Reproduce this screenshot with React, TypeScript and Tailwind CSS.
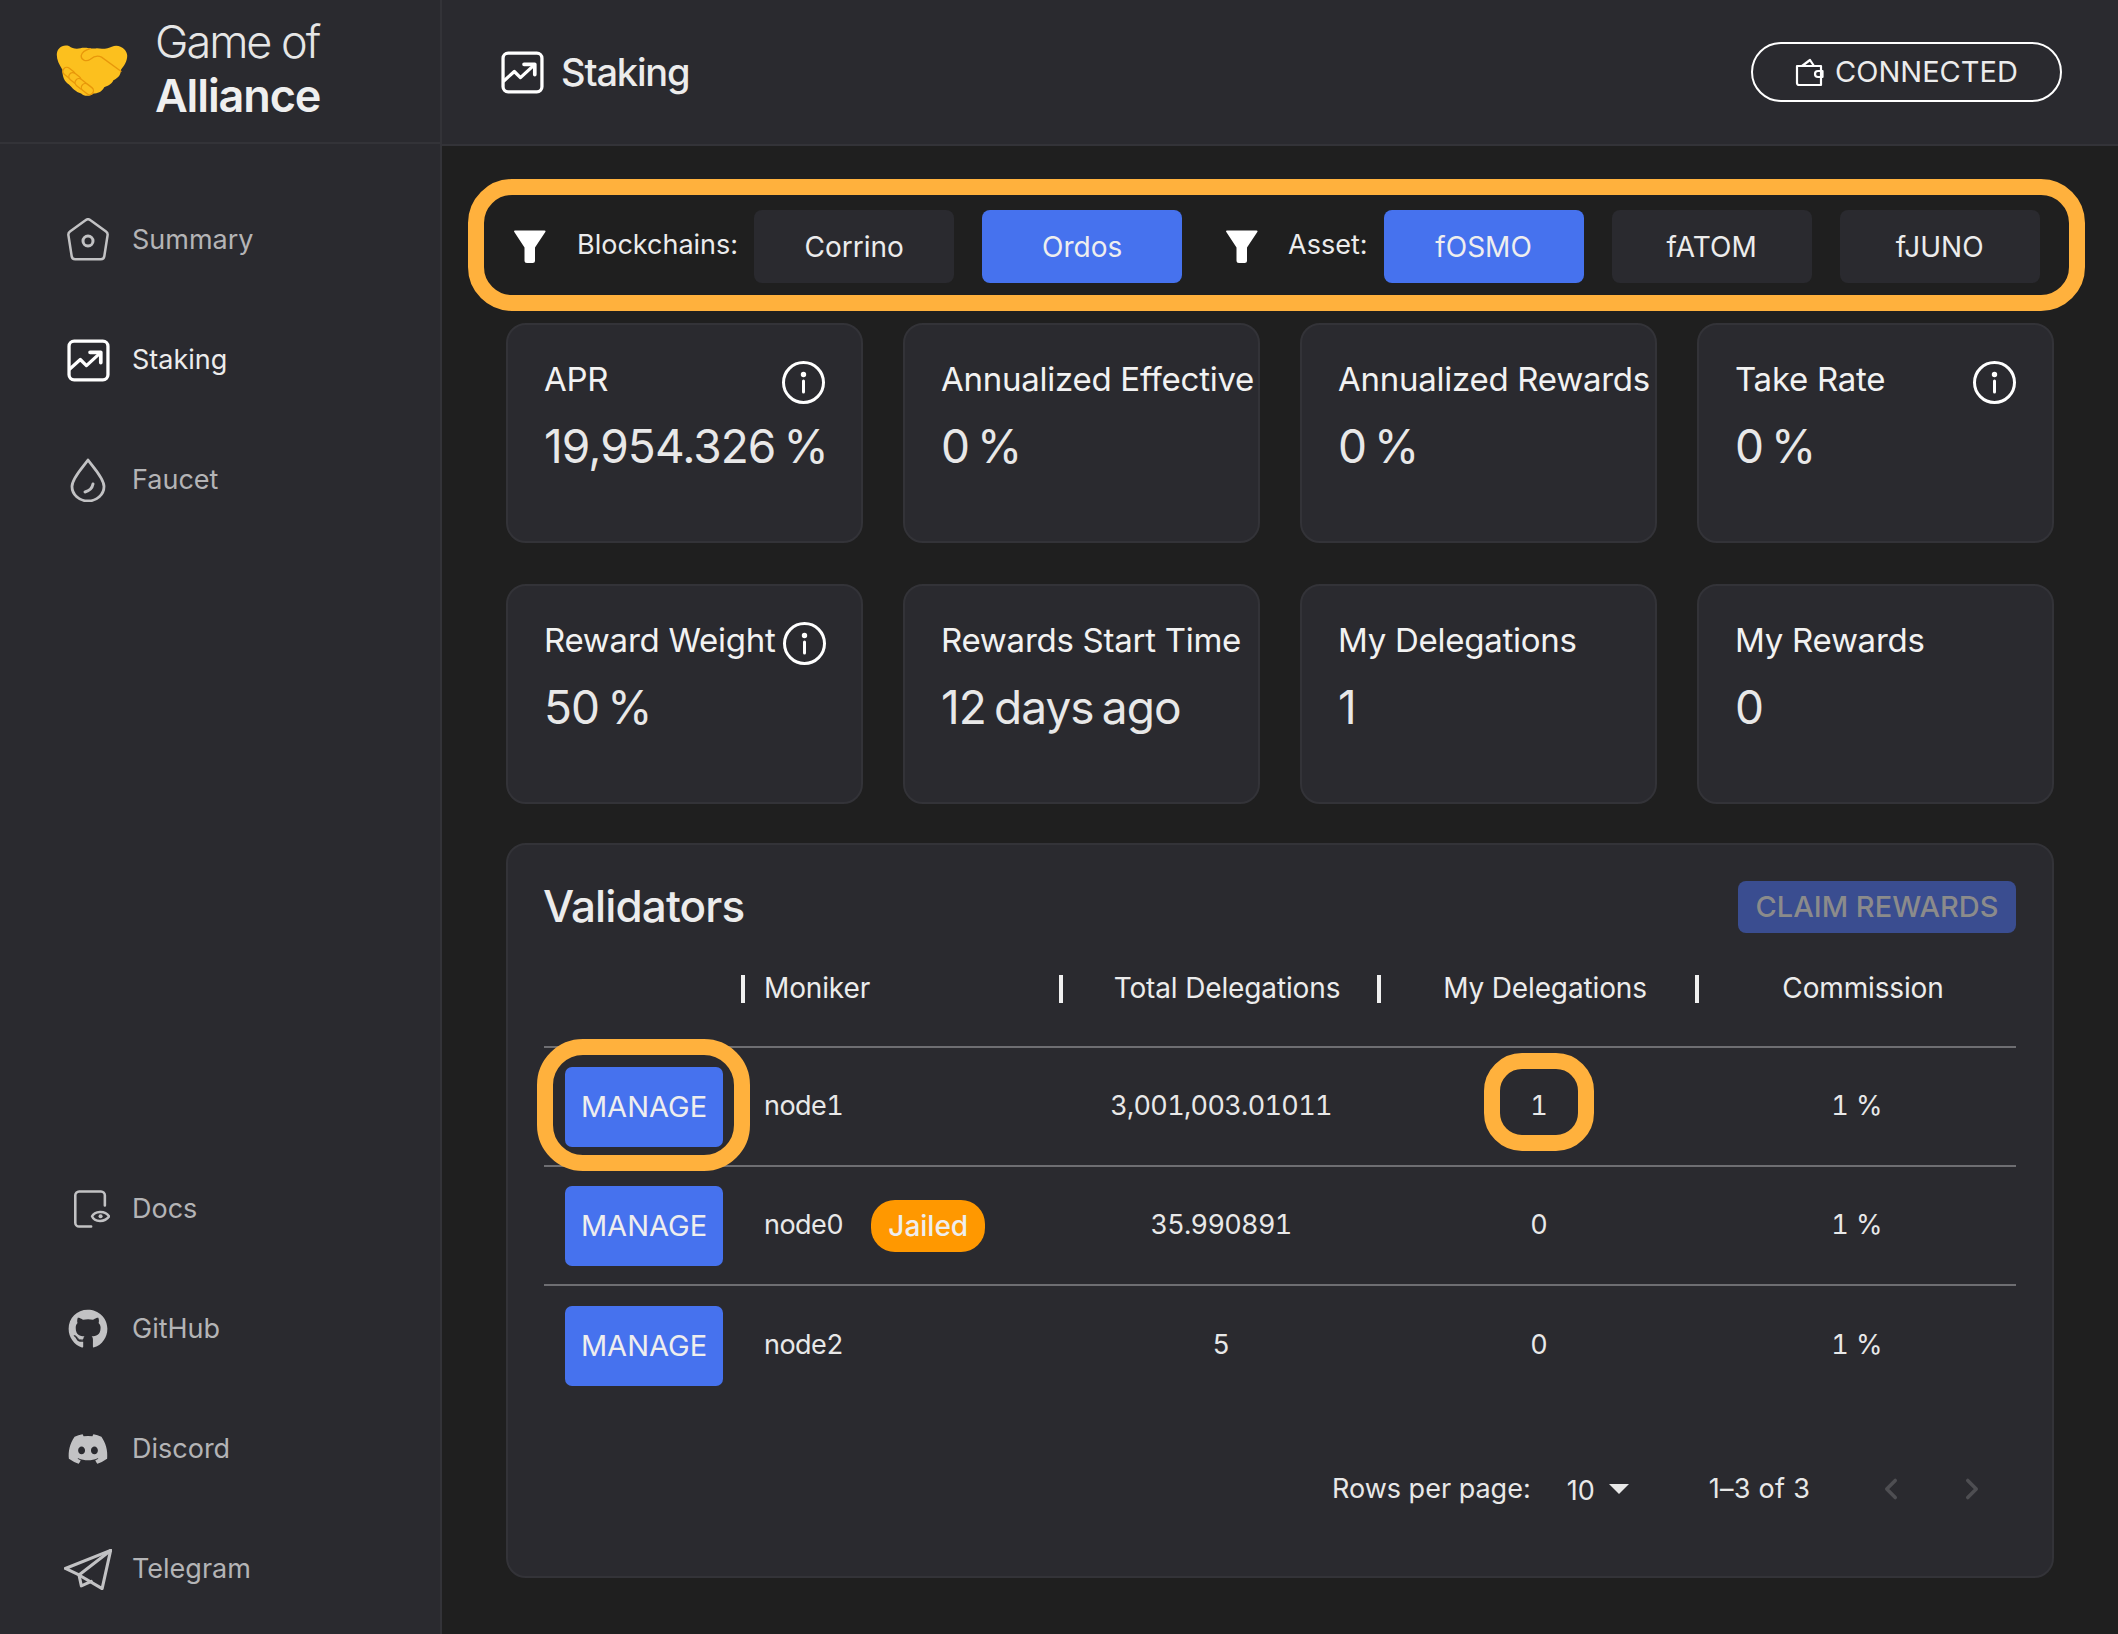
import { ChevronLeft, ChevronRight } from "lucide-react";
import { FaDiscord, FaGithub } from "react-icons/fa";

function Handshake() {
  const fingers = [
    [85, 160],
    [103, 176],
    [122, 194],
    [141, 209],
  ];
  return (
    <svg width="72" height="52" viewBox="48 75 214 158" className="shrink-0">
      <path
        d="M48 105C48 85 65 72 85 78C95 85 105 88 120 85C135 80 150 88 170 85C190 88 205 85 215 80C240 70 262 90 262 108C262 125 252 140 243 150C243 170 228 178 220 182C215 195 200 200 192 203C185 218 170 222 160 222C150 232 130 232 122 222C105 218 95 205 85 195C70 185 65 170 65 150C55 135 48 120 48 105Z"
        fill="#fcc01e"
      />
      <path d="M150 86C135 90 124 97 122 108C122 122 138 127 150 118C160 110 172 106 184 112L243 155" fill="none" stroke="#e8970a" strokeWidth="4" strokeLinecap="round" />
      {fingers.map(([cx, cy]) => (
        <rect
          key={cx}
          x={cx - 20}
          y={cy - 12}
          width="40"
          height="24"
          rx="12"
          fill="#fcc01e"
          stroke="#e8970a"
          strokeWidth="4"
          transform={`rotate(38 ${cx} ${cy})`}
        />
      ))}
    </svg>
  );
}

function HomeIcon() {
  return (
    <svg width="44" height="44" viewBox="0 0 44 44" fill="none" stroke="#c2c2c4" strokeWidth="2.5" strokeLinejoin="round">
      <path d="M19.5 2.2a4 4 0 0 1 5 0L40 13.5a4 4 0 0 1 1.5 4.2l-3.2 20.6a3.5 3.5 0 0 1-3.5 3H9.2a3.5 3.5 0 0 1-3.5-3L2.500 17.700A4 4 0 0 1 4 13.500Z" />
      <circle cx="22" cy="23" r="5" strokeWidth="3" />
    </svg>
  );
}

function ChartIcon({ size }: { size: number }) {
  return (
    <svg width={size} height={size} viewBox="0 0 42 42" fill="none" stroke="#fff" strokeWidth="3.2" strokeLinecap="round" strokeLinejoin="round">
      <rect x="2" y="2" width="38" height="38" rx="5" />
      <path d="M3 29L13 20L19 26L32 14" />
      <path d="M22.500 13H33V23" strokeWidth="3.600" />
    </svg>
  );
}

function DropIcon() {
  return (
    <svg width="36" height="44" viewBox="0 0 36 44" fill="none" stroke="#c2c2c4" strokeWidth="2.8" strokeLinecap="round" strokeLinejoin="round">
      <path d="M18 2C13 9 2 20 2 28.500A16 14.500 0 0 0 34 28.500C34 20 23 9 18 2Z" />
      <path d="M15 34C19 33 22 31 23 26" strokeWidth="3" />
    </svg>
  );
}

function DocsIcon() {
  return (
    <svg width="40" height="42" viewBox="0 0 42 44" fill="none" stroke="#c2c2c4" strokeLinecap="round" strokeLinejoin="round" className="ml-[8px]">
      <path d="M36 18V6a4.500 4.500 0 0 0-4.500-4.500H6A4.500 4.500 0 0 0 1.500 6V38A4.500 4.500 0 0 0 6 42.500H20" strokeWidth="3" />
      <path d="M21 30.500C24 24.500 36 23 41 30.500C36 38 24 37.500 21 30.500Z" strokeWidth="2.800" />
      <circle cx="31" cy="30.500" r="2.400" fill="#c2c2c4" stroke="none" />
    </svg>
  );
}

function TelegramIcon() {
  return (
    <svg width="48" height="41" viewBox="194 1198 141 120" fill="none" stroke="#c2c2c4" strokeWidth="9" strokeLinejoin="round" strokeLinecap="round" className="shrink-0">
      <path d="M331 1202L198 1255L238 1274L306 1314Z" />
      <path d="M331 1202L238 1274L245 1306L274 1293" />
    </svg>
  );
}

function Funnel() {
  return (
    <svg width="33" height="33" viewBox="0 0 33 33" fill="#fff" className="shrink-0">
      <path d="M1 1.500A1 1 0 0 1 2 0.500H31.500A1 1 0 0 1 32.300 2L22 17.500V30.500A2.500 2.500 0 0 1 19.500 33H14A2.500 2.500 0 0 1 11.500 30.500V17.500Z" />
    </svg>
  );
}

function InfoIcon() {
  return (
    <svg width="43" height="43" viewBox="0 0 43 43" fill="none" stroke="#fff" strokeWidth="3" strokeLinecap="round" className="mt-[2px] shrink-0">
      <circle cx="21.500" cy="21.500" r="20" />
      <path d="M21.500 20V31" />
      <circle cx="21.500" cy="13.500" r="1.200" fill="#fff" />
    </svg>
  );
}

function WalletIcon() {
  return (
    <svg width="29" height="29" viewBox="0 0 29 29" fill="none" stroke="#fff" strokeWidth="2.200" strokeLinejoin="round">
      <path d="M2 8H26V27H4A2 2 0 0 1 2 25Z" />
      <path d="M7 8L15 2L19 8" />
      <path d="M27.500 13H23A3 3 0 0 0 23 19H27.500Z" />
    </svg>
  );
}

function NavItem({ icon, label, active }: { icon: React.ReactNode; label: string; active?: boolean }) {
  return (
    <div className={`flex h-[120px] items-center pl-[66px] text-[27px] ${active ? "text-[#ececec]" : "text-[#b4b4b6]"}`}>
      <div className="flex w-[44px] justify-center">{icon}</div>
      <span className="ml-[22px]">{label}</span>
    </div>
  );
}

function FilterButton({ label, active }: { label: string; active?: boolean }) {
  return (
    <div
      className={`flex h-[73px] w-[200px] shrink-0 items-center justify-center rounded-[8px] text-[28px] ${
        active ? "bg-[#4672ee] text-[#eeeeee]" : "bg-[#2a2a2f] text-[#ececec]"
      }`}
    >
      {label}
    </div>
  );
}

function StatCard({ title, value, info, inline }: { title: string; value: string; info?: boolean; inline?: boolean }) {
  return (
    <div className="h-[220px] rounded-[20px] border-2 border-[#333338] bg-[#2a2a2f] pl-[36px] pr-[36px] pt-[35px]">
      <div className={`flex h-[43px] items-center justify-between whitespace-nowrap text-[33px] tracking-[-0.008em] text-[#f2f2f2] ${inline ? "gap-2" : ""}`}>
        <span className="mb-[3px]">{title}</span>
        {info && <InfoIcon />}
      </div>
      <div className="mt-[15px] whitespace-nowrap text-[46px] leading-[56px] tracking-[-0.02em] [word-spacing:-4px] text-[#e8e8e8]">{value}</div>
    </div>
  );
}

function ManageButton() {
  return (
    <div className="ml-[21px] flex h-[80px] w-[158px] items-center justify-center rounded-[7px] bg-[#4672ee] text-[29px] text-[#eeeeee]">
      MANAGE
    </div>
  );
}

function Row({ name, jailed, total, mine, first, last }: { name: string; jailed?: boolean; total: string; mine: string; first?: boolean; last?: boolean }) {
  return (
    <div className={`grid grid-cols-[200px_318px_318px_318px_318px] items-center text-[27px] tabular-nums text-[#e8e8e8] ${last ? "h-[119px]" : "h-[119px] border-b-2 border-[#6e6e72]"}`}>
      <div className="relative">
        <ManageButton />
        {first && <div className="absolute left-[-7px] top-[-28px] h-[132px] w-[213px] rounded-[46px] border-[16px] border-[#ffb13d]" />}
      </div>
      <div className="flex items-center pl-[20px]">
        <span className="tracking-[-0.02em]">{name}</span>
        {jailed && (
          <span className="ml-[28px] flex h-[52px] w-[114px] items-center justify-center rounded-[24px] bg-[#ff9800] text-[28px] font-medium text-[#eeeeee]">
            Jailed
          </span>
        )}
      </div>
      <div className="text-center tracking-[-0.025em]">{total}</div>
      <div className="relative text-center">
        {mine}
        {first && <div className="absolute left-[104px] top-[-33px] h-[98px] w-[110px] rounded-[38px] border-[16px] border-[#ffb13d]" />}
      </div>
      <div className="text-center">1 %</div>
    </div>
  );
}

function HeaderCell({ label, left }: { label: string; left?: boolean }) {
  return (
    <div className={`flex items-center ${left ? "pl-[20px]" : "justify-center pl-[12px]"} relative h-full`}>
      <div className="absolute left-[-3px] top-[32px] h-[28px] w-[4px] bg-[#f0f0f0]" />
      <span>{label}</span>
    </div>
  );
}

export default function App() {
  return (
    <div className="flex h-[1634px] w-[2118px] overflow-hidden bg-[#1f1f1f] font-['Inter',sans-serif]">
      <aside className="flex w-[442px] shrink-0 flex-col border-r-2 border-[#333338] bg-[#2a2a2f]">
        <div className="flex h-[144px] items-center border-b-2 border-[#333338] pl-[56px]">
          <Handshake />
          <div className="ml-[27px] -mt-[5px] flex flex-col">
            <span className="text-[45px] font-light leading-[54px] tracking-[-0.045em] text-[#e6e6e6]">Game of</span>
            <span className="text-[45px] font-semibold leading-[54px] tracking-[-0.025em] text-[#efefef]">Alliance</span>
          </div>
        </div>
        <nav className="flex flex-1 flex-col justify-between pb-[5px] pt-[36px]">
          <div>
            <NavItem icon={<HomeIcon />} label="Summary" />
            <NavItem icon={<ChartIcon size={43} />} label="Staking" active />
            <NavItem icon={<DropIcon />} label="Faucet" />
          </div>
          <div>
            <NavItem icon={<DocsIcon />} label="Docs" />
            <NavItem icon={<FaGithub size={40} color="#c2c2c4" />} label="GitHub" />
            <NavItem icon={<FaDiscord size={42} color="#c2c2c4" />} label="Discord" />
            <NavItem icon={<TelegramIcon />} label="Telegram" />
          </div>
        </nav>
      </aside>

      <main className="flex min-w-0 flex-1 flex-col">
        <header className="flex h-[146px] shrink-0 items-center justify-between border-b-2 border-[#333338] bg-[#2a2a2f] pl-[59px] pr-[56px]">
          <div className="flex items-center gap-[17px]">
            <ChartIcon size={43} />
            <span className="text-[38px] font-medium tracking-[-0.03em] text-[#ececec]">Staking</span>
          </div>
          <div className="flex h-[60px] w-[311px] items-center justify-center gap-[11px] rounded-full border-2 border-white text-[29px] text-[#ececec]">
            <WalletIcon />
            CONNECTED
          </div>
        </header>

        <div className="flex flex-1 flex-col px-[64px]">
          <div className="relative mt-[64px] flex h-[73px] items-center pl-[7px]">
            <Funnel />
            <span className="ml-[31px] -mt-[2px] text-[27px] text-[#ececec]">Blockchains:</span>
            <div className="ml-[16px] flex gap-[28px]">
              <FilterButton label="Corrino" />
              <FilterButton label="Ordos" active />
            </div>
            <div className="ml-[43px]">
              <Funnel />
            </div>
            <span className="ml-[30px] -mt-[2px] text-[27px] text-[#ececec]">Asset:</span>
            <div className="ml-[16px] flex gap-[28px]">
              <FilterButton label="fOSMO" active />
              <FilterButton label="fATOM" />
              <FilterButton label="fJUNO" />
            </div>
            <div className="absolute bottom-[-28px] left-[-38px] right-[-31px] top-[-31px] rounded-[44px] border-[16px] border-[#ffb13d]" />
          </div>

          <div className="mt-[40px] grid grid-cols-4 gap-x-[40px] gap-y-[41px]">
            <StatCard title="APR" value="19,954.326 %" info />
            <StatCard title="Annualized Effective" value="0 %" />
            <StatCard title="Annualized Rewards" value="0 %" />
            <StatCard title="Take Rate" value="0 %" info />
            <StatCard title="Reward Weight" value="50 %" info inline />
            <StatCard title="Rewards Start Time" value="12 days ago" />
            <StatCard title="My Delegations" value="1" />
            <StatCard title="My Rewards" value="0" />
          </div>

          <section className="mt-[39px] h-[735px] rounded-[20px] border-2 border-[#333338] bg-[#2a2a2f] px-[36px] pt-[35px]">
            <div className="flex h-[54px] items-center justify-between">
              <h2 className="mb-[3px] -ml-[1px] text-[44px] font-medium tracking-[-0.02em] text-[#ececec]">Validators</h2>
              <div className="flex h-[52px] w-[278px] items-center justify-center rounded-[8px] bg-[#3a4d90] text-[29px] font-medium text-[#8b8b8b]">
                CLAIM REWARDS
              </div>
            </div>
            <div className="grid h-[114px] grid-cols-[200px_318px_318px_318px_318px] border-b-2 border-[#6e6e72] pb-[14px] pt-[9px] text-[28px] tracking-[-0.005em] text-[#ececec]">
              <div />
              <HeaderCell label="Moniker" left />
              <HeaderCell label="Total Delegations" />
              <HeaderCell label="My Delegations" />
              <HeaderCell label="Commission" />
            </div>
            <Row name="node1" total="3,001,003.01011" mine="1" first />
            <Row name="node0" jailed total="35.990891" mine="0" />
            <Row name="node2" total="5" mine="0" last />
            <div className="mt-[64px] flex h-[40px] items-center text-[27px] text-[#e8e8e8]">
              <span className="ml-[788px]">Rows per page:</span>
              <span className="ml-[36px] mt-[4px]">10</span>
              <svg width="20" height="10" viewBox="0 0 20 10" fill="#e8e8e8" className="ml-[14px]">
                <path d="M0 0H20L10 10Z" />
              </svg>
              <span className="ml-[80px] tracking-[0.01em]">1–3 of 3</span>
              <ChevronLeft size={34} strokeWidth={2.500} color="#4e4e52" className="ml-[64px]" />
              <ChevronRight size={34} strokeWidth={2.500} color="#4e4e52" className="ml-[47px]" />
            </div>
          </section>
        </div>
      </main>
    </div>
  );
}
